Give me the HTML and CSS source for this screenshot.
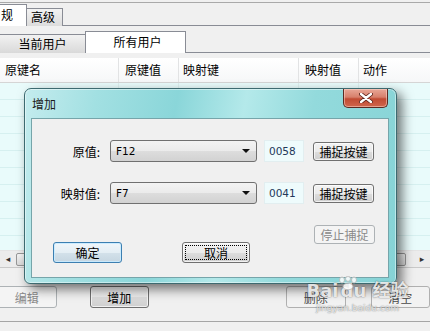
FILE: index.html
```html
<!DOCTYPE html>
<html lang="zh-CN">
<head>
  <meta charset="UTF-8">
  <title>按键映射</title>
  <link rel="stylesheet" href="styles.css">
</head>
<body>

  <div class="app">
    <div class="tabbar">
      <div class="tab tab-on">规</div>
      <div class="tab">高级</div>
    </div>

    <div class="subbar">
      <div class="subtab">当前用户</div>
      <div class="subtab subtab-on">所有用户</div>
    </div>

    <div class="grid">
      <div class="grid-head">
        <div class="col c1">原键名</div>
        <div class="col c2">原键值</div>
        <div class="col c3">映射键</div>
        <div class="col c4">映射值</div>
        <div class="col c5">动作</div>
      </div>
      <div class="grid-body"></div>
      <div class="hscroll">
        <span class="arrow">&#9666;</span>
        <div class="thumb"></div>
        <span class="arrow">&#9656;</span>
      </div>
    </div>

    <div class="actions">
      <button class="btn btn-off first">编辑</button>
      <button class="btn btn-add">增加</button>
      <button class="btn btn-dim btn-del">删除</button>
      <button class="btn btn-dim btn-clear">清空</button>
    </div>
  </div>

  <!-- dialog over the list -->
  <div class="dialog">
    <div class="dlg-title">
      <span class="dlg-caption">增加</span>
      <div class="dlg-close">
        <svg width="14" height="10" viewBox="0 0 14 10">
          <path d="M2 1 L12 9 M12 1 L2 9" stroke="#5a2018" stroke-width="4" stroke-linecap="round"/>
          <path d="M2 1 L12 9 M12 1 L2 9" stroke="#ffffff" stroke-width="2.4" stroke-linecap="round"/>
        </svg>
      </div>
    </div>

    <div class="dlg-panel">
      <div class="row">
        <label class="lbl">原值:</label>
        <div class="combo"><span>F12</span><i class="caret"></i></div>
        <div class="code">0058</div>
        <button class="btn btn-small">捕捉按键</button>
      </div>
      <div class="row row-2">
        <label class="lbl">映射值:</label>
        <div class="combo"><span>F7</span><i class="caret"></i></div>
        <div class="code">0041</div>
        <button class="btn btn-small">捕捉按键</button>
      </div>
      <div class="dlg-foot">
        <button class="btn btn-default">确定</button>
        <button class="btn btn-focus">取消</button>
        <button class="btn btn-small btn-off btn-stop">停止捕捉</button>
      </div>
    </div>
  </div>

  <div class="watermark">
    <div class="wm-logo">Bai<svg class="paw" width="22" height="14" viewBox="0 0 22 14">
        <ellipse cx="5" cy="4" rx="2.5" ry="3" fill="#fff" stroke="#bbb"/>
        <ellipse cx="11" cy="2.8" rx="2.5" ry="2.6" fill="#fff" stroke="#bbb"/>
        <ellipse cx="17" cy="4" rx="2.5" ry="3" fill="#fff" stroke="#bbb"/>
        <ellipse cx="11" cy="10.5" rx="5" ry="3.3" fill="#fff" stroke="#bbb"/>
      </svg>du 经验</div>
    <div class="wm-url">jingyan.baidu.com</div>
  </div>

</body>
</html>
```

FILE: styles.css
```css
* {
  box-sizing: border-box;
}

body {
  margin: 0;
  width: 430px;
  height: 331px;
  overflow: hidden;
  position: relative;
  background-color: #f0f0f0;
  font-family: "Noto Sans CJK SC", sans-serif;
  font-size: 12px;
  color: #000000;
}

.app {
  margin-top: 2px;
  border-top: 1px solid #a9a9a9;
}

/* top tabs */

.tabbar {
  display: flex;
  align-items: flex-end;
  height: 23px;
  border-bottom: 1px solid #898c95;
}

.tab {
  width: 37px;
  height: 18px;
  margin-bottom: -1px;
  margin-left: -1px;
  border: 1px solid #898c95;
  border-bottom: none;
  background: linear-gradient(#f3f3f3, #dcdcdc);
  line-height: 16px;
  padding-left: 4px;
}

.tab-on {
  width: 28px;
  height: 22px;
  margin-left: -1px;
  background: #ffffff;
  line-height: 20px;
  padding-left: 1px;
  position: relative;
  z-index: 1;
}

.subbar {
  display: flex;
  align-items: flex-end;
  height: 27px;
  border-bottom: 1px solid #898c95;
}

.subtab {
  width: 87px;
  height: 19px;
  margin-left: -1px;
  margin-bottom: -1px;
  border: 1px solid #898c95;
  border-bottom: none;
  background: linear-gradient(#f2f2f2, #d9d9d9);
  text-align: center;
  line-height: 18px;
}

.subtab-on {
  width: 101px;
  height: 22px;
  background: #ffffff;
  line-height: 19px;
  padding-left: 4px;
}

/* list */

.grid {
  margin-top: 5px;
  border-bottom: 1px solid #c9c9c9;
}

.grid-head {
  display: flex;
  height: 25px;
  background: linear-gradient(#ffffff, #f6f7f8);
  border-bottom: 1px solid #d5d5d5;
}

.col {
  height: 24px;
  line-height: 24px;
  padding-left: 5px;
  border-right: 1px solid #e2e3e4;
}

.c1 { width: 119px; }
.c2 { width: 60px; padding-left: 6px; }
.c3 { width: 120px; padding-left: 4px; }
.c4 { width: 60px; padding-left: 6px; }
.c5 { flex: 1; padding-left: 4px; border-right: none; }

.grid-body {
  height: 167px;
  background-color: #e9fbfb;
  background-image:
    repeating-linear-gradient(to bottom, transparent 0, transparent 16px, #d6f0f0 16px, #d6f0f0 17px),
    linear-gradient(to right, transparent 118px, #dcefef 118px, #dcefef 119px, transparent 119px,
      transparent 178px, #dcefef 178px, #dcefef 179px, transparent 179px,
      transparent 298px, #dcefef 298px, #dcefef 299px, transparent 299px,
      transparent 358px, #dcefef 358px, #dcefef 359px, transparent 359px);
}

.hscroll {
  display: flex;
  align-items: center;
  height: 17px;
  background: #ececec;
  border-top: 1px solid #e4e4e4;
}

.arrow {
  width: 16px;
  font-size: 9px;
  color: #333333;
  text-align: center;
  font-family: "DejaVu Sans", sans-serif;
}

.thumb {
  flex: 1;
  height: 13px;
  margin-right: 8px;
  border: 1px solid #979797;
  border-radius: 2px;
  background: linear-gradient(#f4f4f4, #dadada);
}

/* buttons */

.btn {
  display: flex;
  align-items: center;
  justify-content: center;
  height: 22px;
  padding: 0;
  border: 1px solid #707070;
  border-radius: 3px;
  background: linear-gradient(#f3f3f3 0%, #ebebeb 50%, #dddddd 51%, #cfcfcf 100%);
  box-shadow: inset 0 0 0 1px rgba(255, 255, 255, 0.7);
  font-family: "Noto Sans CJK SC", sans-serif;
  font-size: 12px;
  color: #000000;
}

.btn-off {
  border-color: #adb2b5;
  background: #f4f4f4;
  box-shadow: none;
  color: #8a8a8a;
}

.btn-dim {
  border-color: #b0b0b0;
  background: #f2f2f2;
  box-shadow: none;
  color: #4a4a4a;
}

.actions {
  display: flex;
  height: 54px;
  padding-top: 18px;
  border-bottom: 1px solid #a5a5a5;
}

.actions .btn {
  width: 60px;
}

.actions .first {
  margin-left: -3px;
}

.btn-add {
  margin-left: 33px;
}

.btn-del {
  margin-left: 137px;
}

.btn-clear {
  margin-left: 25px;
}

/* dialog */

.dialog {
  position: absolute;
  left: 24px;
  top: 88px;
  width: 373px;
  height: 196px;
  display: flex;
  flex-direction: column;
  padding: 0 7px 5px 6px;
  border: 1px solid #3d6a70;
  border-radius: 7px 7px 6px 6px;
  background: linear-gradient(100deg, #c4ecee 0%, #a2e0e2 18%, #8ad6d9 38%, #b4e9ea 55%, #93dadc 72%, #86d3d6 100%);
  box-shadow: inset 0 0 0 1px rgba(255, 255, 255, 0.45), 5px 5px 12px rgba(0, 0, 0, 0.55);
}

.dlg-title {
  display: flex;
  height: 29px;
}

.dlg-caption {
  margin-left: 1px;
  margin-top: 7px;
  line-height: 16px;
  color: #1a1a1a;
}

.dlg-close {
  display: flex;
  align-items: center;
  justify-content: center;
  width: 45px;
  height: 19px;
  margin-left: auto;
  margin-right: 1px;
  border: 1px solid #5b2a22;
  border-top: none;
  border-radius: 0 0 5px 5px;
  background: linear-gradient(#e8a797 0%, #d7806c 45%, #c14b33 55%, #d0664c 100%);
  box-shadow: inset 0 0 0 1px rgba(255, 220, 210, 0.5);
}

.dlg-panel {
  flex: 1;
  display: flex;
  flex-direction: column;
  padding-top: 21px;
  border: 1px solid #76a5aa;
  background-color: #f0f0f0;
}

.row {
  display: flex;
  align-items: center;
  height: 22px;
}

.row-2 {
  margin-top: 20px;
}

.lbl {
  width: 68px;
  margin-right: 10px;
  text-align: right;
}

.combo {
  display: flex;
  align-items: center;
  width: 147px;
  height: 22px;
  margin-right: 7px;
  padding-left: 5px;
  padding-right: 6px;
  border: 1px solid #707070;
  border-radius: 3px;
  background: linear-gradient(#f3f3f3 0%, #ebebeb 50%, #dddddd 51%, #d2d2d2 100%);
  font-family: "DejaVu Sans", sans-serif;
  font-size: 10.5px;
}

.caret {
  margin-left: auto;
  width: 0;
  height: 0;
  border-left: 4px solid transparent;
  border-right: 4px solid transparent;
  border-top: 4px solid #111111;
}

.code {
  width: 40px;
  height: 22px;
  margin-right: 9px;
  padding-left: 4px;
  border: 1px solid #e2eef0;
  background-color: #eefbfc;
  line-height: 20px;
  font-family: "DejaVu Sans", sans-serif;
  font-size: 10.5px;
  color: #23385a;
}

.btn-small {
  width: 61px;
  height: 19px;
}

.dlg-foot {
  display: flex;
  height: 38px;
  margin-top: 21px;
}

.btn-default {
  align-self: flex-end;
  width: 69px;
  height: 21px;
  margin-left: 21px;
  border-color: #3c7fb1;
  background: linear-gradient(#f0f6fa 0%, #e4eef4 50%, #d3e1ea 51%, #c6d6e1 100%);
  box-shadow: inset 0 0 0 1px rgba(200, 235, 255, 0.9);
}

.btn-focus {
  align-self: flex-end;
  width: 68px;
  height: 21px;
  margin-left: 60px;
  outline: 1px dotted #000000;
  outline-offset: -4px;
}

.btn-stop {
  align-self: flex-start;
  margin-left: 64px;
}

/* watermark over the bottom corner */

.watermark {
  position: absolute;
  left: 300px;
  top: 276px;
  width: 115px;
  text-align: center;
  color: rgba(255, 255, 255, 0.85);
  text-shadow: 0 0 1px rgba(0, 0, 0, 0.45), 0 0 2px rgba(0, 0, 0, 0.25);
}

.wm-logo {
  display: flex;
  align-items: flex-end;
  justify-content: center;
  font-family: "DejaVu Sans", "Noto Sans CJK SC", sans-serif;
  font-size: 18px;
  font-weight: bold;
  line-height: 22px;
}

.paw {
  margin: 0 -18px 12px -2px;
  opacity: 0.85;
}

.wm-url {
  font-family: "DejaVu Sans", sans-serif;
  font-size: 9px;
  line-height: 12px;
  color: rgba(255, 255, 255, 0.8);
}
```
